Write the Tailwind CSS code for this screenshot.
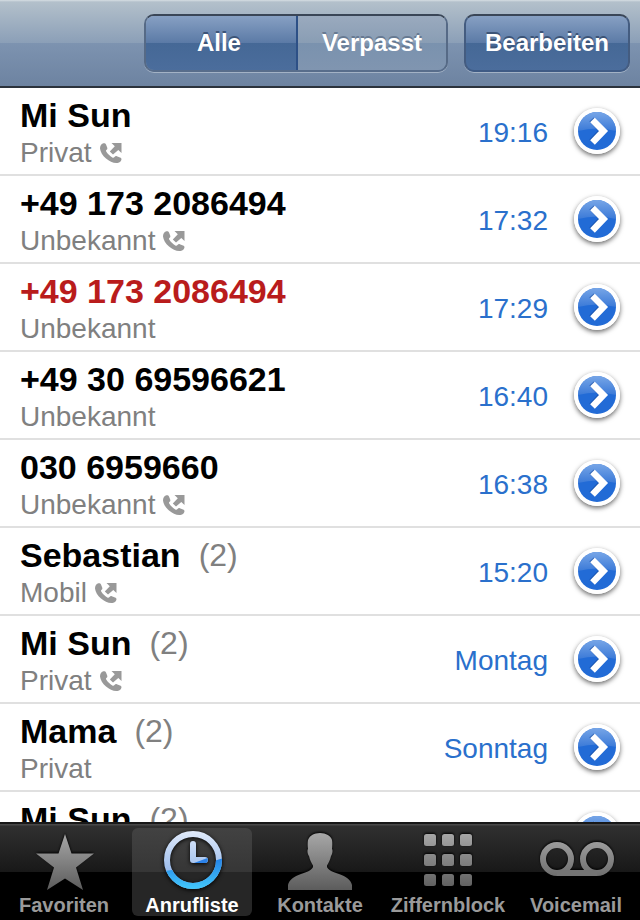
<!DOCTYPE html>
<html lang="de">
<head>
    <meta charset="UTF-8">
    <meta name="viewport" content="width=device-width, initial-scale=1.0">
    <title>Anrufliste</title>
    <script src="https://cdn.jsdelivr.net/npm/@tailwindcss/browser@4"></script>
</head>
<body class="flex flex-col h-screen overflow-hidden bg-white font-['Liberation_Sans',Arial,sans-serif]">

    <!-- Shared icons -->
    <svg class="absolute size-0" aria-hidden="true">
        <defs>
            <linearGradient id="blueDisc" x1="0" y1="0" x2="0" y2="1">
                <stop offset="0" stop-color="#86b0ea"/>
                <stop offset="1" stop-color="#3f7cd8"/>
            </linearGradient>
            <linearGradient id="greyIcon" gradientUnits="userSpaceOnUse" x1="0" y1="4" x2="0" y2="62">
                <stop offset="0" stop-color="#a9a9a9"/>
                <stop offset="1" stop-color="#5c5c5c"/>
            </linearGradient>
            <linearGradient id="clockTop" gradientUnits="userSpaceOnUse" x1="0" y1="3" x2="0" y2="50">
                <stop offset="0" stop-color="#e0eafa"/>
                <stop offset="1" stop-color="#8fb4ea"/>
            </linearGradient>
            <linearGradient id="clockBottom" gradientUnits="userSpaceOnUse" x1="0" y1="26" x2="0" y2="61">
                <stop offset="0" stop-color="#1f78e4"/>
                <stop offset="1" stop-color="#43c8fb"/>
            </linearGradient>
            <clipPath id="clockClip">
                <path d="M0 44 Q40 42 80 27 V66 H0Z"/>
            </clipPath>
        </defs>
        <symbol id="detail" viewBox="0 0 46 46">
            <circle cx="23" cy="23" r="23" fill="#fff"/>
            <circle cx="23" cy="23" r="19" fill="#226bd6"/>
            <path d="M4 23 A19 19 0 0 1 42 23 Q23 18 4 23Z" fill="url(#blueDisc)" opacity=".85"/>
            <path d="M17.500 11.500 L28 22.500 L17.500 33.500" fill="none" stroke="#174b9c" stroke-width="6" opacity=".6"/>
            <path d="M18.500 12 L29.500 23 L18.500 34.500" fill="none" stroke="#fff" stroke-width="6.500"/>
        </symbol>
        <symbol id="outgoing" viewBox="0 0 22 20">
            <path fill="#999" d="M3.300 .3 C1 1 0 3 0 5.500 C.4 9 2.500 12.500 6 15.500 C9.500 18.500 13.500 20.300 17.500 19.900 C19.800 19.600 21.300 18.200 21.500 16.300 C21.500 15.300 21 14.800 20 14.400 L16.800 13.200 C15.800 12.900 15.200 13.200 14.500 14 C13.800 14.900 13.200 15 12.300 14.500 C10 13.200 7.500 10.800 6.200 8.600 C5.800 7.800 6 7.300 6.600 6.800 C7.400 6.100 7.500 5.500 7.200 4.600 L6 1.500 C5.600 .5 4.600 0 3.300 .3Z"/>
            <path fill="#999" d="M11.500 0 H21.500 V10 L18.300 7 L13 11.600 L9.800 8.500 L14.800 3.300Z"/>
        </symbol>
    </svg>

    <header class="flex flex-none items-center justify-end gap-4 h-22 pr-[10px] border-b-2 border-[#2b323c] bg-[linear-gradient(#d6dee3_0px,#b3c0cb_2px,#8b9fb7_43px,#7d93b0_43px,#6d83a1_86px)]">
        <div class="flex h-[58px] rounded-[10px] overflow-hidden shadow-[0_1px_0_#a3b2c5] border-2 border-t-[#3a4657] border-x-[#566a86] border-b-[#586d8b]">
            <button class="w-[152px] pr-1 border-r-2 border-[#2d5086] pb-px text-2xl font-bold text-white [text-shadow:0_-2px_0_#3c5477] bg-[linear-gradient(#87a0c3,#5b7aa6_50%,#456896_50%,#4b6d9c)]">Alle</button>
            <button class="w-[148px] pb-px text-2xl font-bold text-white [text-shadow:0_-2px_0_#677a92] bg-[linear-gradient(#9aaabe,#899db4_50%,#7a92ae_50%,#8095b0)]">Verpasst</button>
        </div>
        <button class="h-[58px] px-[19px] pb-px rounded-[10px] shadow-[0_1px_0_#a3b2c5] border-2 border-t-[#3a4657] border-x-[#445c80] border-b-[#3f5b85] text-2xl font-bold text-white [text-shadow:0_-2px_0_#3c5477] bg-[linear-gradient(#87a0c3,#5b7aa6_50%,#456896_50%,#4b6d9c)]">Bearbeiten</button>
    </header>

    <main class="flex-1 min-h-0 overflow-hidden">
        <ul>
            <li class="flex items-center h-22 pl-5 pr-5 border-b-2 border-[#e0e0e0]">
                <div class="flex-1 pt-1">
                    <h2 class="text-[34px] leading-10 font-bold text-black">Mi Sun</h2>
                    <p class="flex items-center gap-2 text-[28px] leading-9 text-[#808080]">Privat <svg class="w-[22px] h-5"><use href="#outgoing"/></svg></p>
                </div>
                <time class="pt-1 text-[28px] leading-8 text-[#2a70cc]">19:16</time>
                <button class="ml-[26px] size-[46px] rounded-full shadow-[0_2px_5px_#00000099]" aria-label="Details"><svg class="size-full"><use href="#detail"/></svg></button>
            </li>
            <li class="flex items-center h-22 pl-5 pr-5 border-b-2 border-[#e0e0e0]">
                <div class="flex-1 pt-1">
                    <h2 class="text-[34px] leading-10 font-bold text-black">+49 173 2086494</h2>
                    <p class="flex items-center gap-2 text-[28px] leading-9 text-[#808080]">Unbekannt <svg class="w-[22px] h-5"><use href="#outgoing"/></svg></p>
                </div>
                <time class="pt-1 text-[28px] leading-8 text-[#2a70cc]">17:32</time>
                <button class="ml-[26px] size-[46px] rounded-full shadow-[0_2px_5px_#00000099]" aria-label="Details"><svg class="size-full"><use href="#detail"/></svg></button>
            </li>
            <!-- missed call -->
            <li class="flex items-center h-22 pl-5 pr-5 border-b-2 border-[#e0e0e0]">
                <div class="flex-1 pt-1">
                    <h2 class="text-[34px] leading-10 font-bold text-[#b91c1c]">+49 173 2086494</h2>
                    <p class="text-[28px] leading-9 text-[#808080]">Unbekannt</p>
                </div>
                <time class="pt-1 text-[28px] leading-8 text-[#2a70cc]">17:29</time>
                <button class="ml-[26px] size-[46px] rounded-full shadow-[0_2px_5px_#00000099]" aria-label="Details"><svg class="size-full"><use href="#detail"/></svg></button>
            </li>
            <li class="flex items-center h-22 pl-5 pr-5 border-b-2 border-[#e0e0e0]">
                <div class="flex-1 pt-1">
                    <h2 class="text-[34px] leading-10 font-bold text-black">+49 30 69596621</h2>
                    <p class="text-[28px] leading-9 text-[#808080]">Unbekannt</p>
                </div>
                <time class="pt-1 text-[28px] leading-8 text-[#2a70cc]">16:40</time>
                <button class="ml-[26px] size-[46px] rounded-full shadow-[0_2px_5px_#00000099]" aria-label="Details"><svg class="size-full"><use href="#detail"/></svg></button>
            </li>
            <li class="flex items-center h-22 pl-5 pr-5 border-b-2 border-[#e0e0e0]">
                <div class="flex-1 pt-1">
                    <h2 class="text-[34px] leading-10 font-bold text-black">030 6959660</h2>
                    <p class="flex items-center gap-2 text-[28px] leading-9 text-[#808080]">Unbekannt <svg class="w-[22px] h-5"><use href="#outgoing"/></svg></p>
                </div>
                <time class="pt-1 text-[28px] leading-8 text-[#2a70cc]">16:38</time>
                <button class="ml-[26px] size-[46px] rounded-full shadow-[0_2px_5px_#00000099]" aria-label="Details"><svg class="size-full"><use href="#detail"/></svg></button>
            </li>
            <li class="flex items-center h-22 pl-5 pr-5 border-b-2 border-[#e0e0e0]">
                <div class="flex-1 pt-1">
                    <h2 class="flex gap-[18px] text-[34px] leading-10 font-bold text-black">Sebastian <span class="text-[32px] font-normal text-[#808080]">(2)</span></h2>
                    <p class="flex items-center gap-2 text-[28px] leading-9 text-[#808080]">Mobil <svg class="w-[22px] h-5"><use href="#outgoing"/></svg></p>
                </div>
                <time class="pt-1 text-[28px] leading-8 text-[#2a70cc]">15:20</time>
                <button class="ml-[26px] size-[46px] rounded-full shadow-[0_2px_5px_#00000099]" aria-label="Details"><svg class="size-full"><use href="#detail"/></svg></button>
            </li>
            <li class="flex items-center h-22 pl-5 pr-5 border-b-2 border-[#e0e0e0]">
                <div class="flex-1 pt-1">
                    <h2 class="flex gap-[18px] text-[34px] leading-10 font-bold text-black">Mi Sun <span class="text-[32px] font-normal text-[#808080]">(2)</span></h2>
                    <p class="flex items-center gap-2 text-[28px] leading-9 text-[#808080]">Privat <svg class="w-[22px] h-5"><use href="#outgoing"/></svg></p>
                </div>
                <time class="pt-1 text-[28px] leading-8 text-[#2a70cc]">Montag</time>
                <button class="ml-[26px] size-[46px] rounded-full shadow-[0_2px_5px_#00000099]" aria-label="Details"><svg class="size-full"><use href="#detail"/></svg></button>
            </li>
            <li class="flex items-center h-22 pl-5 pr-5 border-b-2 border-[#e0e0e0]">
                <div class="flex-1 pt-1">
                    <h2 class="flex gap-[18px] text-[34px] leading-10 font-bold text-black">Mama <span class="text-[32px] font-normal text-[#808080]">(2)</span></h2>
                    <p class="text-[28px] leading-9 text-[#808080]">Privat</p>
                </div>
                <time class="pt-1 text-[28px] leading-8 text-[#2a70cc]">Sonntag</time>
                <button class="ml-[26px] size-[46px] rounded-full shadow-[0_2px_5px_#00000099]" aria-label="Details"><svg class="size-full"><use href="#detail"/></svg></button>
            </li>
            <li class="flex items-center h-22 pl-5 pr-5 border-b-2 border-[#e0e0e0]">
                <div class="flex-1 pt-1">
                    <h2 class="flex gap-[18px] text-[34px] leading-10 font-bold text-black">Mi Sun <span class="text-[32px] font-normal text-[#808080]">(2)</span></h2>
                    <p class="text-[28px] leading-9 text-[#808080]">Privat</p>
                </div>
                <button class="ml-[26px] size-[46px] rounded-full shadow-[0_2px_5px_#00000099]" aria-label="Details"><svg class="size-full"><use href="#detail"/></svg></button>
            </li>
        </ul>
    </main>

    <nav class="grid flex-none grid-cols-5 pt-1 pb-1 border-t-2 border-[#181818] bg-[linear-gradient(#484848_0px,#484848_1px,#303030_2px,#181818_48px,#000_48px)]">
        <a href="#" class="flex flex-col items-center mx-1 rounded-md text-xl leading-[22px] font-bold text-[#9a9a9a]">
            <svg class="w-20 h-[66px] drop-shadow-[0_-1px_1px_#000]" viewBox="0 0 80 66">
                <path fill="url(#greyIcon)" d="M41 6 L47.500 25.500 H70 L52 39.500 L59 62 L41 50.500 L23 62 L30 39.500 L12 25.500 H34.500Z"/>
            </svg>
            Favoriten
        </a>
        <a href="#" class="flex flex-col items-center mx-1 rounded-md text-xl leading-[22px] font-bold text-white bg-[linear-gradient(#424242,#363636_44px,#262626_44px,#262626)]" aria-current="page">
            <svg class="w-20 h-[66px] drop-shadow-[0_1px_2px_#000]" viewBox="0 0 80 66">
                <g fill="none" stroke="url(#clockTop)" stroke-width="6" stroke-linecap="round" stroke-linejoin="round">
                    <circle cx="41" cy="32" r="26"/>
                    <path d="M41 16 V32 H53"/>
                </g>
                <g fill="none" stroke="url(#clockBottom)" stroke-width="6" clip-path="url(#clockClip)">
                    <circle cx="41" cy="32" r="26"/>
                </g>
                <path d="M42 35 L55.500 30 C56.500 33 55 35 53 35Z" fill="#2c82e8"/>
            </svg>
            Anrufliste
        </a>
        <a href="#" class="flex flex-col items-center mx-1 rounded-md text-xl leading-[22px] font-bold text-[#9a9a9a]">
            <svg class="w-20 h-[66px] drop-shadow-[0_-1px_1px_#000]" viewBox="0 0 80 66">
                <path fill="url(#greyIcon)" d="M40 5 C46 5 51 8 52 12 C52.500 15 52.300 18 52 21 C53 22 52.500 26 51 28 C50.300 32 48.500 35 47 37.500 V39 C48 42 53 44 59 46 C66 48.500 71 52 72 57 V62 H8 V57 C9 52 14 48.500 21 46 C27 44 32 42 33 39 V37.500 C31.500 35 29.700 32 29 28 C27.500 26 27 22 28 21 C27.700 18 27.500 15 28 12 C30 7 34 5.500 40 5Z"/>
            </svg>
            Kontakte
        </a>
        <a href="#" class="flex flex-col items-center mx-1 rounded-md text-xl leading-[22px] font-bold text-[#9a9a9a]">
            <svg class="w-20 h-[66px] drop-shadow-[0_-1px_1px_#000]" viewBox="0 0 80 66">
                <g fill="url(#greyIcon)">
                    <rect x="16" y="6" width="12" height="12" rx="2.500"/>
                    <rect x="34" y="6" width="12" height="12" rx="2.500"/>
                    <rect x="52" y="6" width="12" height="12" rx="2.500"/>
                    <rect x="16" y="26" width="12" height="12" rx="2.500"/>
                    <rect x="34" y="26" width="12" height="12" rx="2.500"/>
                    <rect x="52" y="26" width="12" height="12" rx="2.500"/>
                    <rect x="16" y="46" width="12" height="12" rx="2.500"/>
                    <rect x="34" y="46" width="12" height="12" rx="2.500"/>
                    <rect x="52" y="46" width="12" height="12" rx="2.500"/>
                </g>
            </svg>
            Ziffernblock
        </a>
        <a href="#" class="flex flex-col items-center mx-1 rounded-md text-xl leading-[22px] font-bold text-[#9a9a9a]">
            <svg class="w-20 h-[66px] drop-shadow-[0_-1px_1px_#000]" viewBox="0 0 80 66">
                <g fill="none" stroke="url(#greyIcon)" stroke-width="6">
                    <circle cx="21" cy="31" r="14"/>
                    <circle cx="61" cy="31" r="14"/>
                </g>
                <path d="M21 42 H61 V48 H21Z" fill="#747474"/>
            </svg>
            Voicemail
        </a>
    </nav>
</body>
</html>
